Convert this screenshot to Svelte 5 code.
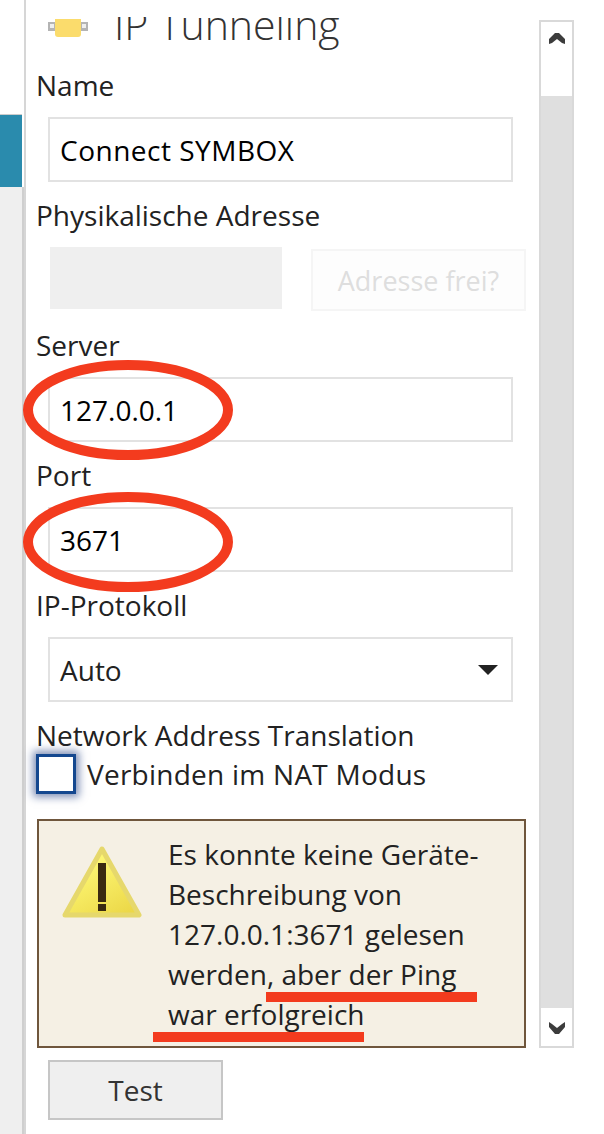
<script>
  const lines = ['Es konnte keine Geräte-', 'Beschreibung von', '127.0.0.1:3671 gelesen', 'werden, aber der Ping', 'war erfolgreich']
</script>

<div class="page">
  <div class="side">
    <div class="side-top"></div>
    <div class="side-active"></div>
    <div class="side-rest"></div>
  </div>

  <div class="main">
    <div class="title">
      <svg class="chip" width="40" height="18" viewBox="0 0 40 18">
        <rect x="0" y="3" width="40" height="9" fill="#b4b4b4" />
        <rect x="2" y="5" width="4" height="4" fill="#eee" />
        <rect x="34" y="5" width="4" height="4" fill="#eee" />
        <path d="M7 0h26v15q0 3-3 3H10q-3 0-3-3z" fill="#fbdc6c" />
      </svg>
      <span>IP Tunneling</span>
    </div>

    <label class="lbl">Name</label>
    <div class="input wide">Connect SYMBOX</div>

    <label class="lbl">Physikalische Adresse</label>
    <div class="addr">
      <div class="addr-field"></div>
      <div class="addr-btn">Adresse frei?</div>
    </div>

    <label class="lbl">Server</label>
    <div class="input">127.0.0.1</div>

    <label class="lbl">Port</label>
    <div class="input">3671</div>

    <label class="lbl">IP-Protokoll</label>
    <div class="input select">
      <span>Auto</span>
      <svg width="20" height="10" viewBox="0 0 20 10"><path d="M0 0h20L10 10z" fill="#222" /></svg>
    </div>

    <label class="lbl">Network Address Translation</label>
    <div class="check-row">
      <div class="check"></div>
      <span>Verbinden im NAT Modus</span>
    </div>

    <div class="warn">
      <svg class="warn-icon" width="80" height="74" viewBox="0 0 80 74">
        <defs>
          <linearGradient id="tri" x1="0.3" y1="0.2" x2="0.8" y2="1">
            <stop offset="0" stop-color="#fdf774" />
            <stop offset="1" stop-color="#ecd848" />
          </linearGradient>
        </defs>
        <path d="M40 3L77 69H3z" fill="url(#tri)" stroke="#e6d86c" stroke-width="5" stroke-linejoin="round" />
        <rect x="36" y="17" width="8" height="39" fill="#3a2a10" />
        <rect x="36" y="58" width="8" height="7" fill="#3a2a10" />
      </svg>
      <div class="warn-text">
        {#each lines as line}
          <div>{line}</div>
        {/each}
      </div>
    </div>

    <div class="test">Test</div>
  </div>

  <div class="scroll">
    <div class="scroll-btn up">
      <svg width="16" height="12" viewBox="0 0 16 12"><path d="M0 12V7L6 1h4l6 6v5l-3-1-5-4-5 4z" fill="#3c3c3c" /></svg>
    </div>
    <div class="scroll-track"></div>
    <div class="scroll-btn down">
      <svg width="16" height="13" viewBox="0 0 16 13"><path d="M0 0v5l6 7h4l6-7V0l-3 2-5 4-5-4z" fill="#3c3c3c" /></svg>
    </div>
  </div>

  <!-- red annotations drawn on top of the screenshot -->
  <svg class="marks" width="604" height="1134" viewBox="0 0 604 1134">
    <ellipse cx="128" cy="410" rx="100" ry="45" fill="none" stroke="#f33b1e" stroke-width="10" />
    <ellipse cx="128" cy="542" rx="100" ry="45" fill="none" stroke="#f33b1e" stroke-width="10" />
    <rect x="266" y="992" width="211" height="10" fill="#f33b1e" />
    <rect x="153" y="1032" width="211" height="10" fill="#f33b1e" />
  </svg>
</div>

<style>
  :global(body) {
    margin: 0;
    background: #fff;
  }

  .page {
    position: relative;
    width: 604px;
    height: 1134px;
    overflow: hidden;
    display: flex;
    font-family: 'Open Sans', 'Noto Sans', sans-serif;
    font-size: 28px;
    color: #222;
  }

  .side {
    width: 24px;
    flex: none;
    display: flex;
    flex-direction: column;
    border-right: 2px solid #d6d6d6;
  }

  .side-top {
    width: 22px;
    height: 115px;
    background: #fff;
    box-shadow: inset 0 -1px 0 #ccc;
  }

  .side-active {
    width: 22px;
    height: 72px;
    background: #2a8bad;
  }

  .side-rest {
    flex: 1;
    background: #efefef;
    border-right: 2px solid #cfcfcf;
  }

  .main {
    width: 489px;
    margin-left: 11px;
    flex: none;
    display: flex;
    flex-direction: column;
  }

  /* the window is scrolled: the heading is cut off at its top edge */
  .title {
    height: 53px;
    margin-top: 17px;
    margin-left: 11px;
    display: flex;
    align-items: flex-start;
    gap: 26px;
    overflow: hidden;
    font-size: 41px;
    font-weight: 300;
    line-height: 1;
    color: #333;
  }

  .title span {
    margin-top: -13px;
    white-space: nowrap;
  }

  .chip {
    margin-top: 2px;
    flex: none;
  }

  .lbl {
    height: 32px;
    line-height: 30px;
    display: block;
    margin-left: -1px;
    white-space: nowrap;
  }

  .input {
    box-sizing: border-box;
    height: 65px;
    width: 465px;
    margin: 15px 0 18px 11px;
    border: 2.5px solid #e2e2e2;
    padding: 0 10px;
    display: flex;
    align-items: center;
    color: #000;
  }

  .wide {
    letter-spacing: 0.5px;
  }

  .select {
    justify-content: space-between;
    color: #222;
  }

  .select svg {
    margin-right: 3px;
  }

  .addr {
    height: 65px;
    margin: 15px 0 18px 13px;
    display: flex;
    align-items: flex-start;
    gap: 29px;
  }

  .addr-field {
    width: 232px;
    height: 62px;
    background: #efefef;
  }

  .addr-btn {
    box-sizing: border-box;
    width: 215px;
    height: 62px;
    margin-top: 2px;
    border: 2px solid #f5f5f5;
    background: #fdfdfd;
    color: #dedede;
    font-size: 27px;
    display: flex;
    align-items: center;
    justify-content: center;
  }

  .check-row {
    display: flex;
    align-items: center;
    gap: 11px;
    height: 40px;
    margin: 2px 0 25px -1px;
    letter-spacing: 0.25px;
  }

  .check {
    box-sizing: border-box;
    width: 40px;
    height: 40px;
    border: 3px solid #14478f;
    background: #fff;
    box-shadow: 0 0 8px 3px rgba(20, 50, 120, 0.55);
  }

  .warn {
    box-sizing: border-box;
    width: 489px;
    height: 229px;
    border: 2px solid #6f563c;
    background: #f5f0e4;
    display: flex;
    padding: 13px 0 0 23px;
  }

  .warn-icon {
    flex: none;
    margin-top: 12px;
  }

  .warn-text {
    margin-left: 26px;
    line-height: 40px;
    white-space: nowrap;
  }

  .test {
    box-sizing: border-box;
    width: 175px;
    height: 60px;
    margin: 12px 0 0 11px;
    border: 2.5px solid #c6c6c6;
    background: #efefef;
    display: flex;
    align-items: center;
    justify-content: center;
    color: #333;
  }

  .scroll {
    box-sizing: border-box;
    width: 35px;
    height: 1028px;
    margin: 20px 0 0 13px;
    border: 2px solid #d9d9d9;
    flex: none;
    display: flex;
    flex-direction: column;
    background: #fff;
  }

  .scroll-btn {
    display: flex;
    justify-content: center;
    box-sizing: border-box;
  }

  .scroll-btn.up {
    height: 74px;
    padding-top: 10px;
  }

  .scroll-btn.down {
    height: 38px;
    padding-top: 14px;
  }

  .scroll-track {
    flex: 1;
    background: #dfdfdf;
  }

  .marks {
    position: absolute;
    left: 0;
    top: 0;
    pointer-events: none;
  }
</style>
